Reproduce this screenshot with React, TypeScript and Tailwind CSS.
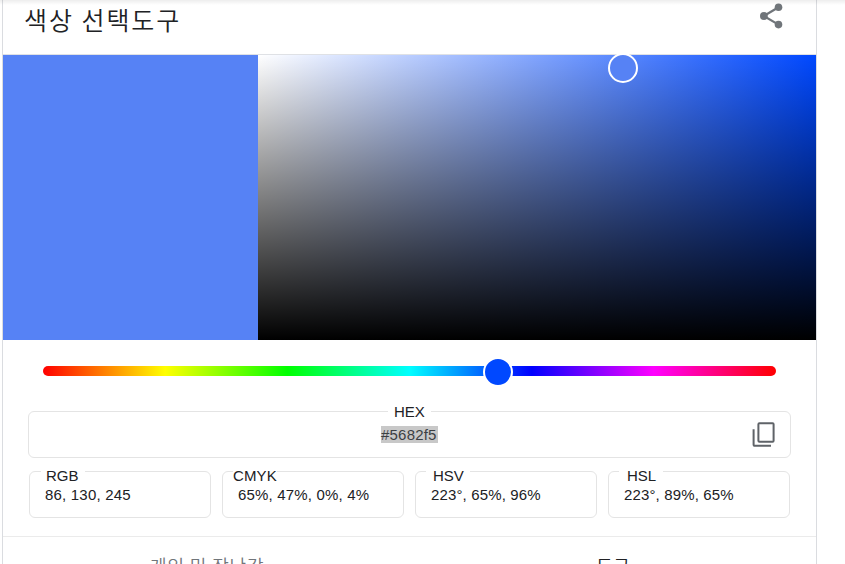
const fields = [
  { label: 'RGB', value: '86, 130, 245', labelClass: 'left-[11px] pl-[5px] pr-[6px]', valueClass: 'pl-[15px] tracking-[0.2px]' },
  { label: 'CMYK', value: '65%, 47%, 0%, 4%', labelClass: 'left-[10px] px-0 tracking-[0.1px]', valueClass: 'pl-[15px] tracking-[0.18px]' },
  { label: 'HSV', value: '223°, 65%, 96%', labelClass: 'left-[10px] pl-[7px] pr-[6px]', valueClass: 'pl-[15px] tracking-[0.14px]' },
  { label: 'HSL', value: '223°, 89%, 65%', labelClass: 'left-[10px] pl-[8px] pr-[7px]', valueClass: 'pl-[15px] tracking-[0.14px]' },
];

function ShareIcon() {
  return (
    <svg className="h-[26px] w-[24px] shrink-0" viewBox="0 0 24 26" fill="#70757a">
      <path d="M18.5 4.2 3.8 13 18.5 21.6" fill="none" stroke="#70757a" strokeWidth="2.2" />
      <circle cx="18.5" cy="4.2" r="3.8" />
      <circle cx="3.9" cy="13" r="3.9" />
      <circle cx="18.5" cy="21.6" r="3.8" />
    </svg>
  );
}

function CopyIcon() {
  return (
    <svg className="h-[26px] w-[24px] shrink-0" viewBox="0 0 24 26" fill="none" stroke="#5f6368" strokeWidth="2">
      <rect x="6.4" y="1.3" width="15.2" height="18.4" rx="1" />
      <path d="M1.6 7.2V22.8a1 1 0 0 0 1 1H19" />
    </svg>
  );
}

export default function App() {
  return (
    <div className="relative h-[564px] w-[845px] overflow-hidden bg-white pl-[2px] font-['Liberation_Sans','Noto_Sans_CJK_KR',sans-serif] text-[15px] leading-[17px] text-[#202124]">
      <main className="flex h-[564px] w-[815px] flex-col border-x border-[#dadce0]">
        <header className="flex h-[55px] shrink-0 items-start justify-between border-b border-[#dfe1e5] pl-[21px] pr-[32px]">
          <h1 className="pt-[3px] font-['Noto_Sans_CJK_KR',sans-serif] text-[25px] font-[350] leading-[32px] tracking-[1.95px] whitespace-nowrap">색상 선택도구</h1>
          <button aria-label="공유" className="mt-[3px]"><ShareIcon /></button>
        </header>

        <section className="flex h-[285px] shrink-0">
          <div className="w-[255px] bg-[#5682f5]" />
          <div className="relative flex-1 bg-[linear-gradient(to_top,#000,transparent),linear-gradient(to_right,#fff,#0048ff)]">
            <span className="absolute left-[350px] top-[-2px] h-[30px] w-[30px] rounded-full border-2 border-white bg-[#5682f5]" />
          </div>
        </section>

        <div className="relative mx-[40px] mt-[26px] h-[10px] w-[733px] shrink-0 rounded-full bg-[linear-gradient(to_right,#f00,#ff0,#0f0,#0ff,#00f,#f0f,#f00)]">
          <span className="absolute left-[440px] top-[-9px] h-[30px] w-[30px] rounded-full border-2 border-white bg-[#0048ff]" />
        </div>

        <section className="relative ml-[25px] mt-[35px] flex h-[47px] w-[763px] shrink-0 items-center justify-end rounded-[6px] border border-[#e4e4e4] pr-[14px]">
          <span className="absolute left-[359px] top-[-9px] bg-white px-[6px]">HEX</span>
          <span className="absolute left-[352px] top-[14px] bg-[#c8c8c8] pr-px tracking-[0.2px] text-[#3c4043]">#5682f5</span>
          <button aria-label="복사"><CopyIcon /></button>
        </section>

        <section className="ml-[26px] mt-[13px] grid w-[761px] shrink-0 grid-cols-4 gap-[11px]">
          {fields.map((f) => (
            <div key={f.label} className="relative h-[47px] rounded-[6px] border border-[#e4e4e4] pt-[14px]">
              <span className={`absolute top-[-5px] bg-white h-[17px] ${f.labelClass}`}>{f.label}</span>
              <p className={`relative whitespace-nowrap ${f.valueClass}`}>{f.value}</p>
            </div>
          ))}
        </section>

        <nav className="mt-[18px] grid shrink-0 grid-cols-2 border-t border-[#ebebeb] pt-[12px] text-center font-['Noto_Sans_CJK_KR',sans-serif] text-[18px] font-[350] leading-[32px]">
          <span className="pl-[2px] tracking-[0.9px] text-[#70757a]">게임 및 장난감</span>
          <span className="pl-px tracking-[0.5px]">도구</span>
        </nav>
      </main>
      <div className="pointer-events-none absolute left-0 top-0 h-[5px] w-full bg-gradient-to-b from-black/[0.07] to-transparent" />
    </div>
  );
}
